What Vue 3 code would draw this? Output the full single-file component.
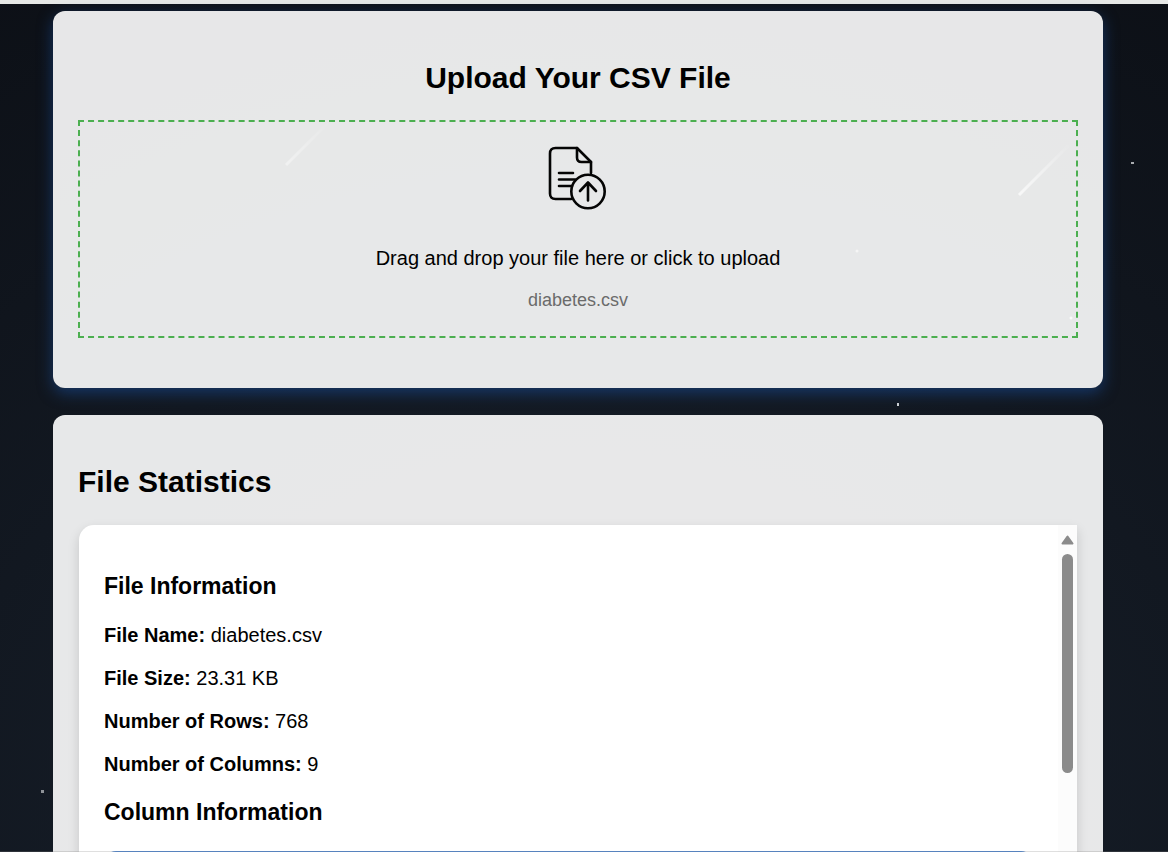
<script setup>
import { ref } from 'vue'

const fileName = ref('diabetes.csv')
const details = [
  { label: 'File Name:', value: 'diabetes.csv' },
  { label: 'File Size:', value: '23.31 KB' },
  { label: 'Number of Rows:', value: '768' },
  { label: 'Number of Columns:', value: '9' },
]

function pick(event) {
  const file = event.target.files[0]
  if (file) fileName.value = file.name
}
</script>

<template>
  <div class="page">
    <div class="strip"></div>
    <svg class="sky" aria-hidden="true">
      <rect x="1131" y="162" width="3" height="2" fill="#a9acb0" />
      <rect x="897" y="403" width="2" height="3" fill="#d0d3d6" />
      <rect x="41" y="790" width="3" height="3" fill="#8f9398" />
    </svg>
    <main class="content">
      <section class="card upload">
        <h2>Upload Your CSV File</h2>
        <label class="drop">
          <input class="file" type="file" accept=".csv" @change="pick" />
          <svg class="icon" viewBox="0 0 64 64" fill="none" stroke="#050505" stroke-width="2.6" stroke-linecap="round" stroke-linejoin="round" aria-hidden="true">
            <path d="M25 53H9.500Q4 53 4 47.500V7.500Q4 2 9.500 2H31L45 16V27" />
            <path d="M31 2V11.500Q31 16 35.500 16H45" />
            <path d="M13 27H27M13 33.500H29M13 40H25" />
            <circle cx="42" cy="45.500" r="16.700" />
            <path d="M42 54.500V36.500M34 45L42 36.500L50 45" />
          </svg>
          <span class="prompt">Drag and drop your file here or click to upload</span>
          <span class="name">{{ fileName }}</span>
        </label>
      </section>
      <section class="card stats">
        <h2>File Statistics</h2>
        <div class="panel">
          <div class="info">
            <h3>File Information</h3>
            <p v-for="item in details" :key="item.label"><strong>{{ item.label }}</strong> {{ item.value }}</p>
            <h3 class="second">Column Information</h3>
            <div class="table-top"></div>
          </div>
          <div class="scroll">
            <svg class="arrow" viewBox="0 0 13 10" aria-hidden="true">
              <path d="M6.500 1.500L11.500 8.500H1.500Z" fill="#8b8b8b" stroke="#8b8b8b" stroke-width="2" stroke-linejoin="round" />
            </svg>
            <div class="thumb"></div>
          </div>
        </div>
      </section>
    </main>
    <svg class="sky front" aria-hidden="true">
      <defs>
        <linearGradient id="trail" x1="0" y1="1" x2="1" y2="0">
          <stop offset="0" stop-color="#fff" stop-opacity="0.7" />
          <stop offset="1" stop-color="#fff" stop-opacity="0" />
        </linearGradient>
      </defs>
      <path d="M286 165L332 119" stroke="url(#trail)" stroke-width="3" opacity="0.6" />
      <path d="M1019 195L1071 143" stroke="url(#trail)" stroke-width="3" />
      <circle cx="857" cy="251" r="1.500" fill="#f5f5f5" />
      <circle cx="1071" cy="318" r="1.500" fill="#fafafa" />
    </svg>
  </div>
</template>

<style>
body {
  margin: 0;
}
</style>

<style scoped>
.page {
  position: relative;
  box-sizing: border-box;
  height: 100vh;
  overflow: hidden;
  background: radial-gradient(ellipse 130% 150% at bottom, #19222e 0%, #090b10 100%);
  color: #000;
  font-family: "Liberation Sans", Arial, sans-serif;
  font-size: 20px;
}

.page::after {
  content: "";
  position: absolute;
  inset: auto 0 0;
  height: 1px;
  background: rgba(128, 128, 128, 0.25);
}

.strip {
  height: 4px;
  background: #e6e8e6;
}

.sky {
  position: absolute;
  inset: 0;
  width: 100%;
  height: 100%;
  pointer-events: none;
}

.content {
  position: relative;
  display: flex;
  flex-direction: column;
  gap: 27px;
  padding: 7px 65px 0 53px;
}

.card {
  padding: 25px;
  border-radius: 12px;
  background: rgba(255, 255, 255, 0.9);
}

.upload {
  padding-bottom: 50px;
  box-shadow: 0 5px 15px rgba(26, 80, 160, 0.55);
}

h2 {
  margin: 25px 0;
  font-size: 30px;
  line-height: 34px;
}

.upload h2 {
  text-align: center;
}

.stats h2 {
  margin-bottom: 26px;
}

.drop {
  display: flex;
  flex-direction: column;
  align-items: center;
  box-sizing: border-box;
  padding: 24px 24px 26px;
  border: 2px dashed #4caf50;
  cursor: pointer;
}

.file {
  position: absolute;
  width: 1px;
  height: 1px;
  opacity: 0;
}

.icon {
  width: 64px;
  height: 64px;
}

.prompt {
  margin-top: 36px;
  line-height: 24px;
}

.name {
  margin-top: 20px;
  color: #6b6b6b;
  font-size: 18px;
  line-height: 20px;
}

.panel {
  display: flex;
  height: 500px;
  overflow: hidden;
  margin: 0 1px;
  border-radius: 15px 0 0 15px;
  background: #fff;
  box-shadow: 0 5px 12px rgba(0, 0, 0, 0.15);
}

.info {
  flex: 1;
  padding: 25px;
}

h3 {
  margin: 23px 0 24px;
  font-size: 23px;
  line-height: 27px;
}

.second {
  margin-bottom: 25px;
}

p {
  margin: 0 0 20px;
  line-height: 23px;
}

.table-top {
  height: 60px;
  border-radius: 12px 12px 0 0;
  background: #4a85d3;
}

.scroll {
  display: flex;
  flex-direction: column;
  align-items: center;
  width: 19px;
  padding-top: 10px;
  background: #fcfcfc;
}

.arrow {
  width: 13px;
  height: 10px;
}

.thumb {
  width: 11px;
  height: 219px;
  margin-top: 9px;
  border-radius: 6px;
  background: #8b8b8b;
}
</style>
